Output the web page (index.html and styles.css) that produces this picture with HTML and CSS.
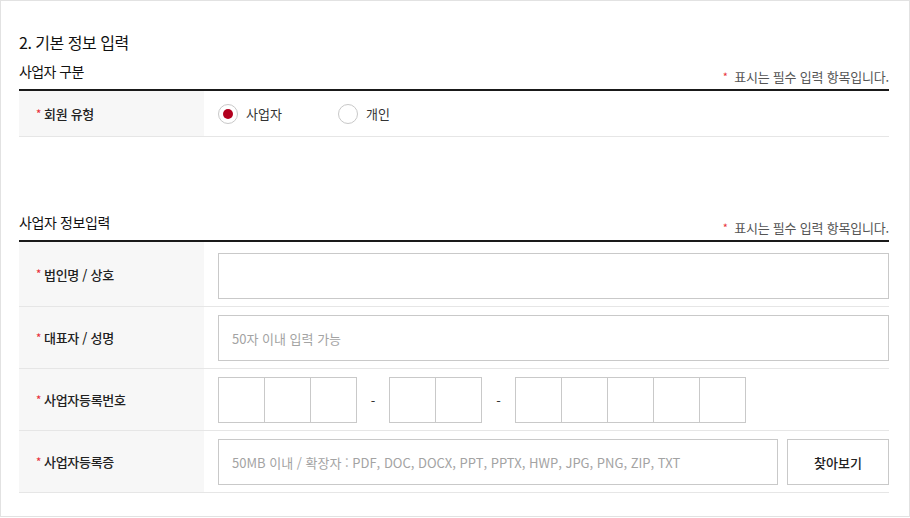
FILE: index.html
```html
<!DOCTYPE html>
<html lang="ko">
<head>
<meta charset="utf-8">
<title>기본 정보 입력</title>
<link rel="stylesheet" href="styles.css">
</head>
<body>
<div class="frame">
  <h2 class="title">2. 기본 정보 입력</h2>

  <section class="section">
    <div class="sec-head">
      <h3 class="sec-title">사업자 구분</h3>
      <p class="note"><span class="req">*</span> 표시는 필수 입력 항목입니다.</p>
    </div>
    <div class="table">
      <div class="row row-short">
        <div class="label"><span class="req">*</span>회원 유형</div>
        <div class="value">
          <label class="radio checked"><span class="circle"></span><span class="rtext">사업자</span></label>
          <label class="radio"><span class="circle"></span><span class="rtext">개인</span></label>
        </div>
      </div>
    </div>
  </section>

  <section class="section section-2">
    <div class="sec-head">
      <h3 class="sec-title sec-title-wide">사업자 정보입력</h3>
      <p class="note"><span class="req">*</span> 표시는 필수 입력 항목입니다.</p>
    </div>
    <div class="table">
      <div class="row first">
        <div class="label"><span class="req">*</span>법인명 / 상호</div>
        <div class="value"><div class="input"></div></div>
      </div>
      <div class="row">
        <div class="label"><span class="req">*</span>대표자 / 성명</div>
        <div class="value"><div class="input"><span class="ph">50자 이내 입력 가능</span></div></div>
      </div>
      <div class="row">
        <div class="label"><span class="req">*</span>사업자등록번호</div>
        <div class="value">
          <div class="seg"><span class="box"></span><span class="box"></span><span class="box"></span></div>
          <span class="dash">-</span>
          <div class="seg"><span class="box"></span><span class="box"></span></div>
          <span class="dash dash-2">-</span>
          <div class="seg"><span class="box"></span><span class="box"></span><span class="box"></span><span class="box"></span><span class="box"></span></div>
        </div>
      </div>
      <div class="row">
        <div class="label"><span class="req">*</span>사업자등록증</div>
        <div class="value">
          <div class="input"><span class="ph">50MB 이내 / 확장자 : PDF, DOC, DOCX, PPT, PPTX, HWP, JPG, PNG, ZIP, TXT</span></div>
          <button class="btn" type="button">찾아보기</button>
        </div>
      </div>
    </div>
  </section>
</div>
</body>
</html>
```
FILE: styles.css
```css
* { box-sizing: border-box; }
html, body { margin: 0; padding: 0; background: #fff; }
body {
  font-family: "Noto Sans CJK KR", "Noto Sans", sans-serif;
  color: #222;
}
.frame {
  width: 910px;
  height: 517px;
  border: 1px solid #e2e2e2;
  padding: 29px 20px 0 18px;
}
.title {
  margin: 0;
  font-size: 16px;
  font-weight: 400;
  letter-spacing: -0.5px;
  line-height: 24px;
  color: #111;
}
.section { margin-top: 7px; }
.section-2 { margin-top: 75px; }
.sec-head {
  display: flex;
  justify-content: space-between;
  align-items: flex-end;
  padding-bottom: 4px;
  border-bottom: 2px solid #1a1a1a;
}
.sec-title {
  margin: 0 0 4px;
  font-size: 14px;
  font-weight: 400;
  letter-spacing: -0.6px;
  line-height: 20px;
  color: #111;
}
.sec-title-wide { letter-spacing: -0.4px; }
.note {
  margin: 0;
  font-size: 13px;
  line-height: 16px;
  color: #555;
  letter-spacing: -0.2px;
}
.note .req { margin-right: 3px; }
.req {
  color: #e8303c;
  font-size: 11px;
  margin-right: 3px;
  position: relative;
  top: -1px;
}
.row {
  display: flex;
  border-bottom: 1px solid #e6e6e6;
  min-height: 62px;
}
.row-short { min-height: 46px; }
.label {
  width: 185px;
  flex: none;
  background: #f7f7f7;
  display: flex;
  align-items: center;
  padding-left: 17px;
  font-size: 13px;
  font-weight: 500;
  letter-spacing: -0.3px;
  color: #222;
}
.value {
  flex: 1;
  display: flex;
  align-items: center;
  padding: 8px 0 7px 14px;
}
.row.first .value { padding-top: 11px; }
.row-short .value { padding: 0 0 0 14px; }
.radio {
  display: flex;
  align-items: center;
  width: 120px;
  font-size: 13px;
  color: #333;
}
.circle {
  width: 20px;
  height: 20px;
  border-radius: 50%;
  border: 1px solid #c8c8c8;
  background: #fff;
  display: flex;
  align-items: center;
  justify-content: center;
  margin-right: 8px;
}
.radio.checked .circle::after {
  content: "";
  width: 10px;
  height: 10px;
  border-radius: 50%;
  background: #b3001e;
}
.input {
  flex: 1;
  height: 46px;
  border: 1px solid #c9c9c9;
  display: flex;
  align-items: center;
  padding-left: 13px;
}
.ph {
  font-size: 13px;
  color: #a3a3a3;
}
.seg { display: flex; }
.box {
  width: 47px;
  height: 46px;
  border: 1px solid #c9c9c9;
}
.box + .box { margin-left: -1px; }
.dash {
  width: 32px;
  text-align: center;
  font-size: 13px;
  color: #333;
}
.dash-2 { width: 33px; }
.btn {
  width: 102px;
  height: 46px;
  margin-left: 9px;
  border: 1px solid #c9c9c9;
  background: #fff;
  font-family: inherit;
  font-size: 13px;
  font-weight: 500;
  color: #222;
  padding: 0;
}
```
